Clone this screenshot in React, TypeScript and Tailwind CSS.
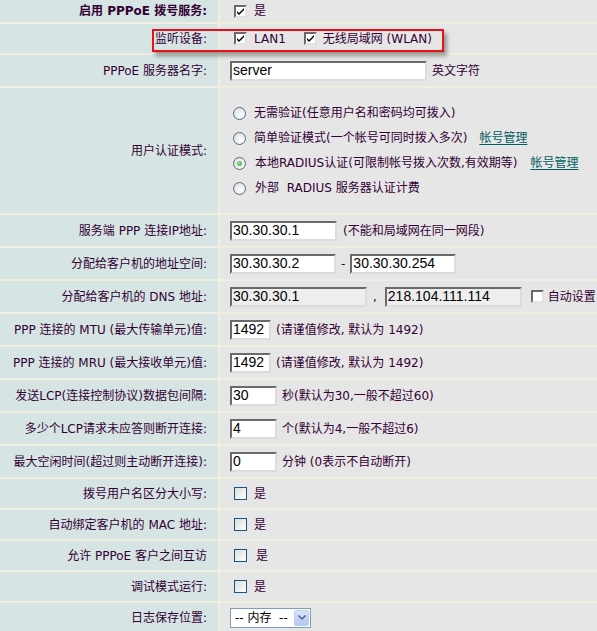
import React from 'react'

const font = 'font-["DejaVu_Sans","Noto_Sans_CJK_SC",sans-serif]'

function Row({ h, label, bold, children, last }: { h: string; label: React.ReactNode; bold?: boolean; children: React.ReactNode; last?: boolean }) {
  return (
    <div className={`flex ${h} ${last ? '' : 'border-b-2 border-[#efefe1]'}`}>
      <div
        className={`w-[220px] shrink-0 bg-[#d6e4e4] border-r-2 border-[#efefe1] flex items-center justify-end pr-[11px] text-[12px] text-[#330033] whitespace-nowrap ${bold ? 'font-bold' : ''}`}
      >
        {label}
      </div>
      <div className="flex-1 bg-[#e6e6e6] flex items-center pl-[10px] text-[12px] text-[#330033] whitespace-nowrap">
        {children}
      </div>
    </div>
  )
}

function ClassicCheck({ checked }: { checked?: boolean }) {
  return (
    <span className="inline-flex w-[13px] h-[13px] bg-white border-2 border-t-[#6a6a6a] border-l-[#6a6a6a] border-b-[#e2e2e2] border-r-[#e2e2e2] items-center justify-center">
      {checked && (
        <svg width="7" height="7" viewBox="0 0 7 7">
          <path d="M0 3 L2 5 L7 0 L7 2 L2 7 L0 5 Z" fill="#000" />
        </svg>
      )}
    </span>
  )
}

function XpCheck() {
  return <span className="inline-block w-[13px] h-[13px] border border-[#1c5180] bg-gradient-to-br from-[#dcdcd7] to-white" />
}

function Radio({ checked }: { checked?: boolean }) {
  return (
    <span className="inline-flex w-[13px] h-[13px] rounded-full border border-[#4d6f92] bg-[radial-gradient(circle_at_65%_65%,#ffffff,#d8d8d2)] items-center justify-center">
      {checked && <span className="w-[5px] h-[5px] rounded-full bg-[radial-gradient(circle_at_40%_40%,#9be69b,#1f9a1f)]" />}
    </span>
  )
}

function Field({ w, value, disabled }: { w: string; value: string; disabled?: boolean }) {
  return (
    <span
      className={`inline-flex items-center ${w} h-[20px] border-2 border-t-[#6a6a6a] border-l-[#6a6a6a] border-b-[#dcdcdc] border-r-[#dcdcdc] pl-[1px] text-[14px] text-black font-["Liberation_Sans",sans-serif] ${disabled ? 'bg-[#eeeeee]' : 'bg-white'}`}
    >
      {value}
    </span>
  )
}

function Link({ children }: { children: React.ReactNode }) {
  return <span className="text-[#006060] underline underline-offset-2">{children}</span>
}

export default function App() {
  return (
    <div className={`relative w-[597px] h-[631px] overflow-hidden bg-[#e6e6e6] ${font}`}>
      <Row h="h-[24px]" bold label="启用 PPPoE 拨号服务:">
        <span className="ml-[4px] flex items-center gap-[7px]">
          <ClassicCheck checked />
          <span>是</span>
        </span>
      </Row>
      <Row h="h-[31px]" label="监听设备:">
        <span className="ml-[4px] flex items-center gap-[7px]">
          <ClassicCheck checked />
          <span>LAN1</span>
        </span>
        <span className="ml-[18px] flex items-center gap-[6px]">
          <ClassicCheck checked />
          <span>无线局域网 (WLAN)</span>
        </span>
      </Row>
      <Row h="h-[33px]" label="PPPoE 服务器名字:">
        <Field w="w-[197px]" value="server" />
        <span className="ml-[5px]">英文字符</span>
      </Row>
      <Row h="h-[127px]" label="用户认证模式:">
        <div className="flex flex-col ml-[3px]">
          <div className="h-[25px] flex items-center gap-[8px]">
            <Radio />
            <span>无需验证(任意用户名和密码均可拨入)</span>
          </div>
          <div className="h-[25px] flex items-center gap-[8px]">
            <Radio />
            <span>简单验证模式(一个帐号可同时拨入多次)</span>
            <span className="ml-[4px]"><Link>帐号管理</Link></span>
          </div>
          <div className="h-[25px] flex items-center gap-[9px]">
            <Radio checked />
            <span>本地RADIUS认证(可限制帐号拨入次数,有效期等)</span>
            <span className="ml-[4px]"><Link>帐号管理</Link></span>
          </div>
          <div className="h-[25px] flex items-center gap-[9px]">
            <Radio />
            <span>外部&nbsp; RADIUS 服务器认证计费</span>
          </div>
        </div>
      </Row>
      <Row h="h-[33px]" label="服务端 PPP 连接IP地址:">
        <Field w="w-[107px]" value="30.30.30.1" />
        <span className="ml-[6px]">(不能和局域网在同一网段)</span>
      </Row>
      <Row h="h-[33px]" label="分配给客户机的地址空间:">
        <Field w="w-[106px]" value="30.30.30.2" />
        <span className="mx-[5px]">-</span>
        <Field w="w-[106px]" value="30.30.30.254" />
      </Row>
      <Row h="h-[33px]" label="分配给客户机的 DNS 地址:">
        <Field w="w-[137px]" value="30.30.30.1" disabled />
        <span className="ml-[6px] mr-[8px]">,</span>
        <Field w="w-[137px]" value="218.104.111.114" disabled />
        <span className="ml-[9px] mr-[4px] flex"><ClassicCheck /></span>
        <span>自动设置</span>
      </Row>
      <Row h="h-[33px]" label="PPP 连接的 MTU (最大传输单元)值:">
        <Field w="w-[41px]" value="1492" />
        <span className="ml-[5px]">(请谨值修改, 默认为 1492)</span>
      </Row>
      <Row h="h-[33px]" label="PPP 连接的 MRU (最大接收单元)值:">
        <Field w="w-[41px]" value="1492" />
        <span className="ml-[5px]">(请谨值修改, 默认为 1492)</span>
      </Row>
      <Row h="h-[33px]" label="发送LCP(连接控制协议)数据包间隔:">
        <Field w="w-[47px]" value="30" />
        <span className="ml-[5px]">秒(默认为30,一般不超过60)</span>
      </Row>
      <Row h="h-[33px]" label="多少个LCP请求未应答则断开连接:">
        <Field w="w-[47px]" value="4" />
        <span className="ml-[5px]">个(默认为4,一般不超过6)</span>
      </Row>
      <Row h="h-[33px]" label="最大空闲时间(超过则主动断开连接):">
        <Field w="w-[47px]" value="0" />
        <span className="ml-[5px]">分钟 (0表示不自动断开)</span>
      </Row>
      <Row h="h-[31px]" label="拨号用户名区分大小写:">
        <span className="ml-[4px] flex items-center gap-[7px]">
          <XpCheck />
          <span>是</span>
        </span>
      </Row>
      <Row h="h-[31px]" label="自动绑定客户机的 MAC 地址:">
        <span className="ml-[4px] flex items-center gap-[7px]">
          <XpCheck />
          <span>是</span>
        </span>
      </Row>
      <Row h="h-[31px]" label="允许 PPPoE 客户之间互访">
        <span className="ml-[4px] flex items-center gap-[9px]">
          <XpCheck />
          <span>是</span>
        </span>
      </Row>
      <Row h="h-[31px]" label="调试模式运行:">
        <span className="ml-[4px] flex items-center gap-[7px]">
          <XpCheck />
          <span>是</span>
        </span>
      </Row>
      <Row h="h-[29px]" last label="日志保存位置:">
        <span className="inline-flex items-center w-[81px] h-[20px] border border-[#7f9db9] bg-white pl-[4px] pr-[1px] text-[12px] text-black">
          <span className="flex-1">-- 内存&nbsp; --</span>
          <span className="w-[15px] h-[16px] rounded-[2px] bg-gradient-to-b from-[#d6e3fd] to-[#b3c8f5] border border-[#bccdf2] flex items-center justify-center">
            <svg width="8" height="6" viewBox="0 0 8 6">
              <path d="M0 1 L1 0 L4 3 L7 0 L8 1 L4 5 Z" fill="#4d6185" />
            </svg>
          </span>
        </span>
      </Row>

      <div className="absolute left-[152px] top-[29px] w-[292px] h-[23px] border-2 border-[#e8101a] shadow-[3px_4px_4px_rgba(0,0,0,0.35)] pointer-events-none" />
    </div>
  )
}
